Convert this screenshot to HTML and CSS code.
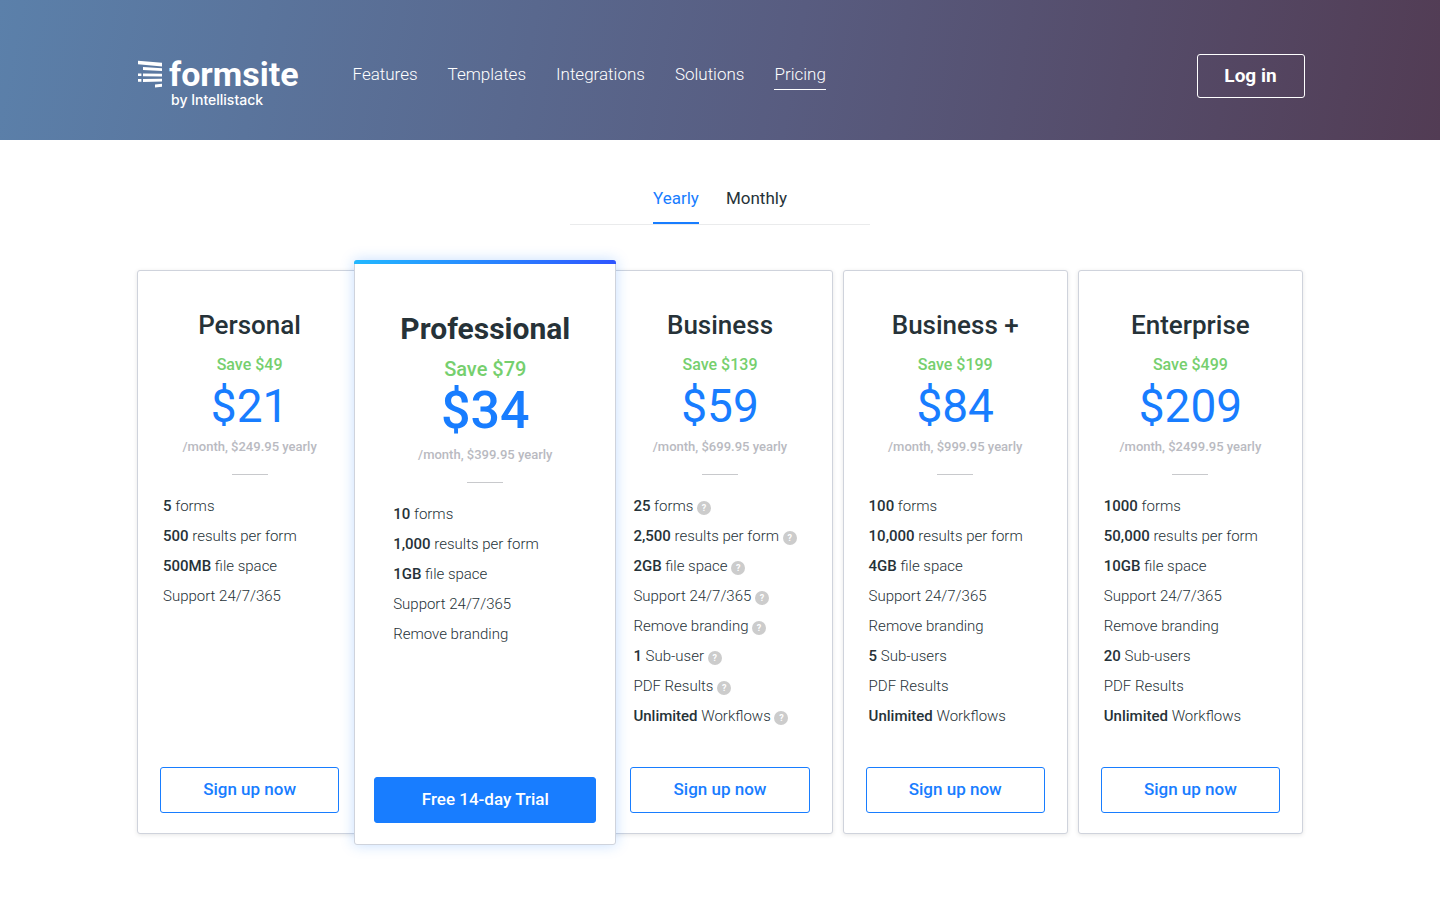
FILE: index.html
```
<!DOCTYPE html>
<html lang="en">

<head>
    <meta charset="UTF-8">
    <meta name="viewport" content="width=device-width, initial-scale=1.0">
    <title>Formsite Pricing</title>
    <link rel="stylesheet" href="styles.css">
</head>

<body>
    <header class="header">
        <div class="header-inner">
            <a href="#" class="logo" aria-label="Formsite by Intellistack">
                <svg width="164" height="56" viewBox="0 0 164 56">
                    <g fill="#fff">
                        <path d="M2 6.8l24 2v3.6L2 10.2z" />
                        <path d="M7 13l19 1.2v2.9L7 15.9z" />
                        <path d="M7 19.4l19 .4v2.8l-19-.4z" />
                        <path d="M7 25l19-.3v2.9L7 27.9z" />
                        <path d="M19 30.4l7-.6v3l-7 .6z" />
                        <path d="M2 19.4h3.4v2.7H2zM2 25h3.4v2.8H2z" />
                    </g>
                    <text x="33" y="32" class="logo-name">formsite</text>
                    <text x="35" y="51" class="logo-by">by Intellistack</text>
                </svg>
            </a>
            <nav class="nav">
                <a href="#">Features</a>
                <a href="#">Templates</a>
                <a href="#">Integrations</a>
                <a href="#">Solutions</a>
                <a href="#" class="active">Pricing</a>
            </nav>
            <button type="button" class="login">Log in</button>
        </div>
    </header>

    <main>
        <div class="tabs">
            <button type="button" class="tab active">Yearly</button>
            <button type="button" class="tab">Monthly</button>
        </div>

        <div class="plans">
            <section class="plan">
                <h2>Personal</h2>
                <p class="save">Save $49</p>
                <p class="price">$21</p>
                <p class="period">/month, $249.95 yearly</p>
                <ul>
                    <li><b>5</b> forms</li>
                    <li><b>500</b> results per form</li>
                    <li><b>500MB</b> file space</li>
                    <li>Support 24/7/365</li>
                </ul>
                <button type="button" class="signup">Sign up now</button>
            </section>

            <section class="plan featured">
                <h2>Professional</h2>
                <p class="save">Save $79</p>
                <p class="price">$34</p>
                <p class="period">/month, $399.95 yearly</p>
                <ul>
                    <li><b>10</b> forms</li>
                    <li><b>1,000</b> results per form</li>
                    <li><b>1GB</b> file space</li>
                    <li>Support 24/7/365</li>
                    <li>Remove branding</li>
                </ul>
                <button type="button" class="signup">Free 14-day Trial</button>
            </section>

            <section class="plan">
                <h2>Business</h2>
                <p class="save">Save $139</p>
                <p class="price">$59</p>
                <p class="period">/month, $699.95 yearly</p>
                <ul>
                    <li><b>25</b> forms <span class="help">?</span></li>
                    <li><b>2,500</b> results per form <span class="help">?</span></li>
                    <li><b>2GB</b> file space <span class="help">?</span></li>
                    <li>Support 24/7/365 <span class="help">?</span></li>
                    <li>Remove branding <span class="help">?</span></li>
                    <li><b>1</b> Sub-user <span class="help">?</span></li>
                    <li>PDF Results <span class="help">?</span></li>
                    <li><b>Unlimited</b> Workflows <span class="help">?</span></li>
                </ul>
                <button type="button" class="signup">Sign up now</button>
            </section>

            <section class="plan">
                <h2>Business +</h2>
                <p class="save">Save $199</p>
                <p class="price">$84</p>
                <p class="period">/month, $999.95 yearly</p>
                <ul>
                    <li><b>100</b> forms</li>
                    <li><b>10,000</b> results per form</li>
                    <li><b>4GB</b> file space</li>
                    <li>Support 24/7/365</li>
                    <li>Remove branding</li>
                    <li><b>5</b> Sub-users</li>
                    <li>PDF Results</li>
                    <li><b>Unlimited</b> Workflows</li>
                </ul>
                <button type="button" class="signup">Sign up now</button>
            </section>

            <section class="plan">
                <h2>Enterprise</h2>
                <p class="save">Save $499</p>
                <p class="price">$209</p>
                <p class="period">/month, $2499.95 yearly</p>
                <ul>
                    <li><b>1000</b> forms</li>
                    <li><b>50,000</b> results per form</li>
                    <li><b>10GB</b> file space</li>
                    <li>Support 24/7/365</li>
                    <li>Remove branding</li>
                    <li><b>20</b> Sub-users</li>
                    <li>PDF Results</li>
                    <li><b>Unlimited</b> Workflows</li>
                </ul>
                <button type="button" class="signup">Sign up now</button>
            </section>
        </div>
    </main>
</body>

</html>
```

FILE: styles.css
```
* {
    margin: 0;
    padding: 0;
    box-sizing: border-box;
}

body {
    font-family: Roboto, sans-serif;
    background-color: #fff;
    color: #263238;
}

button {
    font-family: inherit;
    cursor: pointer;
}

/* Header */
.header {
    padding: 54px 20px 30px;
    background: linear-gradient(100deg, #5b80aa 0%, #585c80 55%, #523c54 100%);
}

.header-inner {
    display: flex;
    align-items: flex-start;
    max-width: 1169px;
    margin: 0 auto;
}

.logo {
    display: block;
    width: 164px;
    height: 56px;
}

.logo-name {
    font: 700 34px Roboto, sans-serif;
    fill: #fff;
}

.logo-by {
    font: 500 14px Inter, sans-serif;
    fill: #fff;
}

.nav {
    display: flex;
    gap: 30px;
    margin: 8px auto 0 53px;
}

.nav a {
    padding-bottom: 3px;
    border-bottom: 1px solid transparent;
    color: #fff;
    font-size: 17px;
    font-weight: 300;
    line-height: 24px;
    text-decoration: none;
}

.nav a.active {
    border-bottom-color: #fff;
}

.login {
    width: 108px;
    height: 44px;
    padding-bottom: 1px;
    border: 1px solid #fff;
    border-radius: 3px;
    background: transparent;
    color: #fff;
    font-size: 19px;
    font-weight: 700;
}

/* Yearly / monthly switch */
.tabs {
    display: flex;
    justify-content: center;
    gap: 27px;
    width: 300px;
    margin: 42px auto 0;
    border-bottom: 1px solid #eaebec;
}

.tab {
    padding: 3px 0 11px;
    border: 0;
    border-bottom: 2px solid transparent;
    background: none;
    color: #263238;
    font-size: 17px;
    line-height: 26px;
}

.tab.active {
    border-bottom-color: #187dff;
    color: #187dff;
}

/* Plans */
.plans {
    display: grid;
    grid-template-columns: repeat(5, 1fr);
    gap: 10px;
    max-width: 1166px;
    margin: 45px auto 66px;
}

.plan {
    display: flex;
    flex-direction: column;
    align-items: center;
    padding: 36px 22px 20px;
    border: 1px solid #cfd3dc;
    border-radius: 3px;
    background: #fff;
    box-shadow: 0 1px 4px rgba(0, 0, 0, 0.1);
}

.plan h2 {
    font-size: 26px;
    font-weight: 500;
    line-height: 36px;
    white-space: nowrap;
}

.save {
    margin-top: 10px;
    color: #76cf6e;
    font-size: 16px;
    font-weight: 500;
    line-height: 24px;
}

.price {
    color: #187dff;
    font-size: 46px;
    line-height: 58px;
}

.period {
    color: #b9bac1;
    font-size: 13px;
    font-weight: 500;
    line-height: 24px;
    white-space: nowrap;
}

.period::after {
    content: "";
    display: block;
    width: 36px;
    margin: 15px auto 0;
    border-bottom: 1px solid #c8c9cc;
}

.plan ul {
    align-self: stretch;
    margin: 16px 0 36px;
    padding-left: 3px;
    list-style: none;
}

.plan li {
    height: 30px;
    font-size: 15px;
    font-weight: 300;
    line-height: 30px;
    white-space: nowrap;
}

.plan b {
    font-weight: 500;
}

.help {
    display: inline-block;
    width: 14px;
    height: 14px;
    border-radius: 50%;
    background: #ccc;
    color: #fff;
    font-size: 9px;
    font-weight: 700;
    line-height: 14px;
    text-align: center;
    vertical-align: 0;
}

.signup {
    width: 100%;
    height: 46px;
    margin-top: auto;
    padding-bottom: 2px;
    border: 1px solid #187dff;
    border-radius: 3px;
    background: #fff;
    color: #187dff;
    font-size: 17px;
    font-weight: 500;
}

/* Highlighted plan overlaps its neighbours */
.featured {
    position: relative;
    z-index: 1;
    margin: -10px -19px -11px -18px;
    padding: 50px 19px 21px;
    box-shadow: 0 0 14px rgba(24, 125, 255, 0.25);
}

.featured::before {
    content: "";
    position: absolute;
    top: -1px;
    left: -1px;
    right: -1px;
    height: 4px;
    border-radius: 3px 3px 0 0;
    background: linear-gradient(90deg, #22b8ff, #2f55ff);
}

.featured h2 {
    font-size: 30px;
    font-weight: 700;
}

.featured .save {
    font-size: 20px;
}

.featured .price {
    font-size: 52px;
    font-weight: 500;
    line-height: 60px;
}

.featured .period {
    margin-top: 2px;
}

.featured ul {
    padding-left: 19px;
}

.featured .signup {
    background: #187dff;
    color: #fff;
}
```
